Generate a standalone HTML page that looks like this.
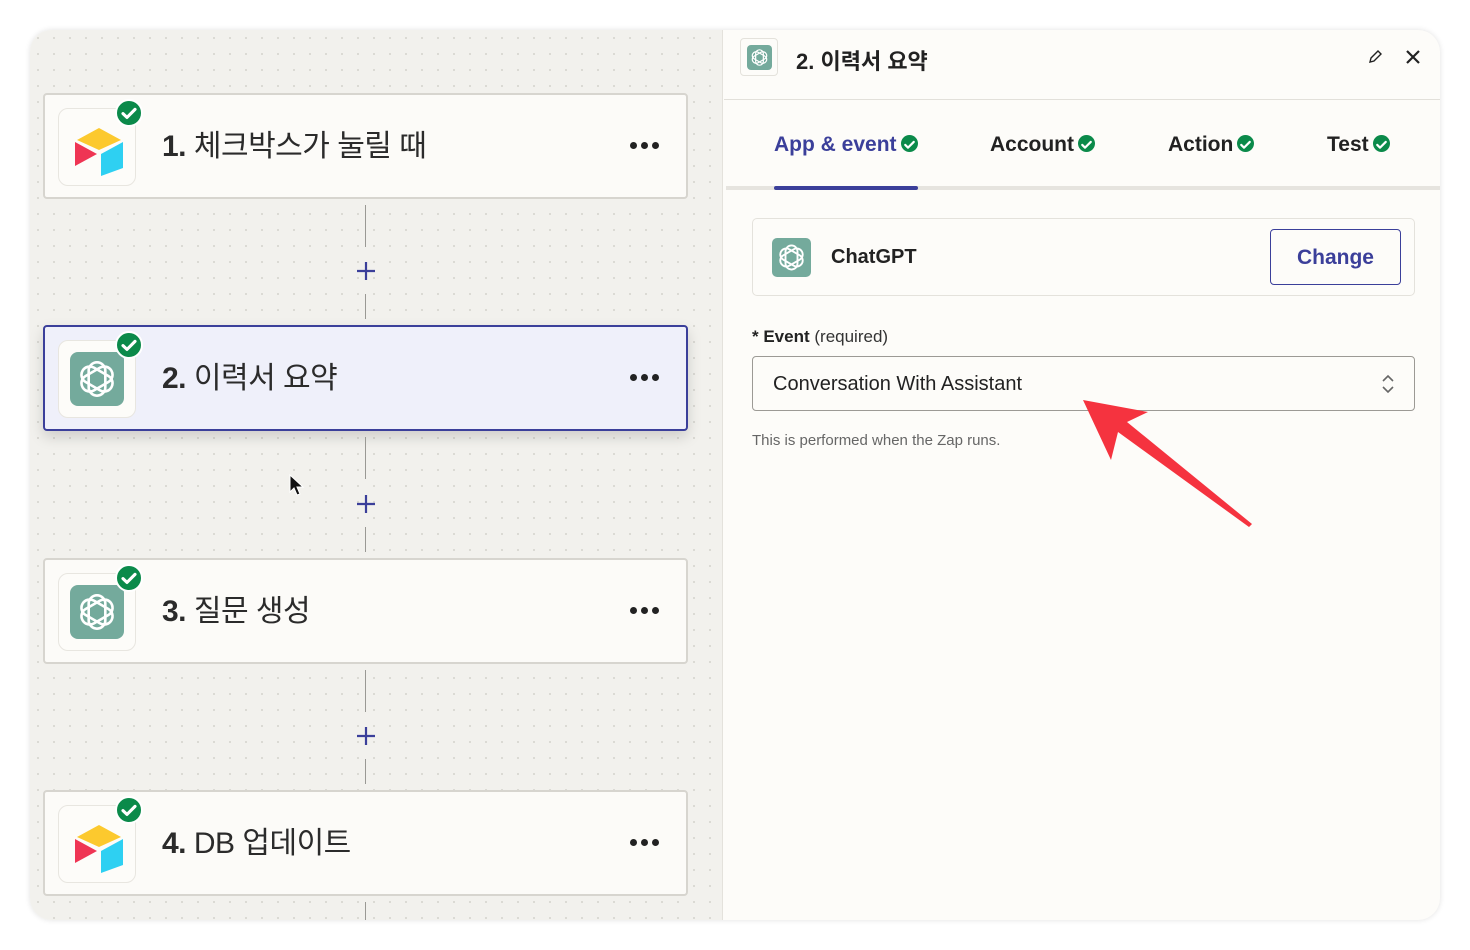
<!DOCTYPE html>
<html><head><meta charset="utf-8"><style>
*{box-sizing:border-box;margin:0;padding:0}
body{width:1470px;height:950px;background:#fff;font-family:"Liberation Sans","Noto Sans CJK KR",sans-serif;position:relative;overflow:hidden}
.frame{position:absolute;left:30px;top:30px;width:1410px;height:890px;border-radius:22px;overflow:hidden;background:#fdfcf9;box-shadow:0 0 6px rgba(0,0,0,.12)}
.left{position:absolute;left:0;top:0;width:693px;height:890px;background-color:#f2f1ed;background-image:radial-gradient(#d9d8d2 1px,transparent 1.2px);background-size:16px 16px;border-right:1px solid #e4e2dc}
.card{position:absolute;left:13px;width:645px;height:106px;background:#fcfbf8;border:2px solid #d7d5cf;border-radius:4px}
.card.sel{background:#eff0fa;border-color:#3b3f9a;box-shadow:0 6px 14px rgba(0,0,0,.15)}
.ib{position:absolute;left:13px;top:13px;width:78px;height:78px;background:#fdfcf9;border:1px solid #e8e6e0;border-radius:10px}
.chk{position:absolute;left:70px;top:4px;width:28px;height:28px;border-radius:50%;background:#0b8a4a;border:2px solid #fff}
.ttl{position:absolute;left:117px;top:35px;font-size:30px;color:#2b2b2b;letter-spacing:-0.5px;line-height:1.1}
.ttl b{font-weight:700}
.dots{position:absolute;left:585px;top:41px}
.dots i{display:inline-block;width:7px;height:7px;border-radius:50%;background:#222;margin-right:4px}
.vl{position:absolute;left:335px;width:1px;background:#9a9994}
.plus{position:absolute;left:326px;width:20px;height:20px}
.gpt{background:#74aa9c;border-radius:8px}
.tab{position:absolute;top:103px;font-size:21px;font-weight:700;color:#222}
.tab .c{display:inline-block;width:17px;height:17px;border-radius:50%;background:#0b8a4a;vertical-align:-2px;margin-left:4px;position:relative}
</style></head><body>
<svg width="0" height="0" style="position:absolute"><defs>
<symbol id="oa" viewBox="0 0 40 40"><g fill="none" stroke="#fff" stroke-width="2.2" transform="translate(20 20) scale(0.88) translate(-20 -20)">
<rect x="13" y="6" width="14" height="28" rx="7"/>
<rect x="13" y="6" width="14" height="28" rx="7" transform="rotate(60 20 20)"/>
<rect x="13" y="6" width="14" height="28" rx="7" transform="rotate(120 20 20)"/>
</g></symbol>
<symbol id="ck" viewBox="0 0 20 20"><path d="M5 10.5l3.3 3.2L15 7" fill="none" stroke="#fff" stroke-width="2.6" stroke-linecap="round" stroke-linejoin="round"/></symbol>
<symbol id="at" viewBox="0 0 60 60"><path d="M10 22 L32 10 L54 22 L32 32Z" fill="#fcc92e"/><path d="M8 24 L30 36 L8 48Z" fill="#ef3554"/><path d="M34 36 L56 24 L56 50 L34 58Z" fill="#2ed0f2"/></symbol>
<symbol id="pl" viewBox="0 0 20 20"><path d="M10 1v18M1 10h18" stroke="#3b3f9a" stroke-width="2.2"/></symbol>
</defs></svg>
<div class="frame">
<div class="left">
 <div class="card" style="top:63px"><div class="ib"><svg style="position:absolute;left:8px;top:9px" width="60" height="60"><use href="#at"/></svg></div><div class="chk"><svg width="24" height="24"><use href="#ck"/></svg></div><div class="ttl"><b>1.</b> 체크박스가 눌릴 때</div><div class="dots"><i></i><i></i><i></i></div></div>
 <div class="vl" style="top:175px;height:42px"></div><svg class="plus" style="top:231px"><use href="#pl"/></svg><div class="vl" style="top:264px;height:25px"></div>
 <div class="card sel" style="top:295px"><div class="ib"><div class="gpt" style="position:absolute;left:11px;top:11px;width:54px;height:54px"><svg width="54" height="54"><use href="#oa"/></svg></div></div><div class="chk"><svg width="24" height="24"><use href="#ck"/></svg></div><div class="ttl"><b>2.</b> 이력서 요약</div><div class="dots"><i></i><i></i><i></i></div></div>
 <div class="vl" style="top:407px;height:42px"></div><svg class="plus" style="top:464px"><use href="#pl"/></svg><div class="vl" style="top:497px;height:25px"></div>
 <div class="card" style="top:528px"><div class="ib"><div class="gpt" style="position:absolute;left:11px;top:11px;width:54px;height:54px"><svg width="54" height="54"><use href="#oa"/></svg></div></div><div class="chk"><svg width="24" height="24"><use href="#ck"/></svg></div><div class="ttl"><b>3.</b> 질문 생성</div><div class="dots"><i></i><i></i><i></i></div></div>
 <div class="vl" style="top:640px;height:42px"></div><svg class="plus" style="top:696px"><use href="#pl"/></svg><div class="vl" style="top:729px;height:25px"></div>
 <div class="card" style="top:760px"><div class="ib"><svg style="position:absolute;left:8px;top:9px" width="60" height="60"><use href="#at"/></svg></div><div class="chk"><svg width="24" height="24"><use href="#ck"/></svg></div><div class="ttl"><b>4.</b> DB 업데이트</div><div class="dots"><i></i><i></i><i></i></div></div>
 <div class="vl" style="top:872px;height:20px"></div>
</div>
<div style="position:absolute;left:710px;top:8px;width:38px;height:38px;border:1px solid #e4e2dc;border-radius:4px;background:#fdfcf9"><div class="gpt" style="position:absolute;left:6px;top:6px;width:25px;height:25px;border-radius:4px"><svg width="25" height="25"><use href="#oa"/></svg></div></div>
<div style="position:absolute;left:766px;top:14px;font-size:22px;font-weight:700;color:#222"><span>2.</span> <span>이력서 요약</span></div>
<svg style="position:absolute;left:1337px;top:19px" width="16" height="16" viewBox="0 0 16 16"><path d="M3 13l1-4 7-7 3 3-7 7z" fill="none" stroke="#222" stroke-width="1.4"/></svg>
<svg style="position:absolute;left:1375px;top:19px" width="16" height="16" viewBox="0 0 16 16"><path d="M2 2l12 12M14 2L2 14" stroke="#222" stroke-width="2.2"/></svg>
<div style="position:absolute;left:694px;top:69px;width:716px;height:1px;background:#e2e0da"></div>
<div class="tab" style="left:744px;color:#3b3f9a">App &amp; event<span class="c"><svg width="17" height="17"><use href="#ck"/></svg></span></div>
<div class="tab" style="left:960px">Account<span class="c"><svg width="17" height="17"><use href="#ck"/></svg></span></div>
<div class="tab" style="left:1138px">Action<span class="c"><svg width="17" height="17"><use href="#ck"/></svg></span></div>
<div class="tab" style="left:1297px">Test<span class="c"><svg width="17" height="17"><use href="#ck"/></svg></span></div>
<div style="position:absolute;left:696px;top:156px;width:714px;height:4px;background:#e6e4df"></div>
<div style="position:absolute;left:744px;top:156px;width:144px;height:4px;background:#3b3f9a;border-radius:2px"></div>
<div style="position:absolute;left:722px;top:188px;width:663px;height:78px;border:1px solid #e4e2dc;border-radius:5px;background:#fdfcf9"></div>
<div class="gpt" style="position:absolute;left:742px;top:208px;width:39px;height:39px;border-radius:5px"><svg width="39" height="39"><use href="#oa"/></svg></div>
<div style="position:absolute;left:801px;top:216px;font-size:20px;font-weight:700;color:#222">ChatGPT</div>
<div style="position:absolute;left:1240px;top:199px;width:131px;height:56px;border:1.5px solid #3b3f9a;border-radius:4px;color:#3b3f9a;font-size:21px;font-weight:700;text-align:center;line-height:55px">Change</div>
<div style="position:absolute;left:722px;top:297px;font-size:17px;color:#222"><b>*&nbsp;Event</b> <span style="color:#333">(required)</span></div>
<div style="position:absolute;left:722px;top:326px;width:663px;height:55px;border:1px solid #9c9a95;border-radius:4px;background:#fdfcf9"></div>
<div style="position:absolute;left:743px;top:343px;font-size:20px;color:#222">Conversation With Assistant</div>
<svg style="position:absolute;left:1350px;top:342px" width="16" height="24" viewBox="0 0 16 24"><path d="M3 9l5-5 5 5M3 15l5 5 5-5" fill="none" stroke="#666" stroke-width="1.6"/></svg>
<div style="position:absolute;left:722px;top:402px;font-size:15px;color:#666">This is performed when the Zap runs.</div>
<svg style="position:absolute;left:0;top:0" width="1410" height="890"><path d="M1053 370 L1118 382 L1097 392 L1222 494 L1219 497 L1088 402 L1081 430 Z" fill="#f5333f"/></svg>
</div>
<svg style="position:absolute;left:289px;top:474px" width="16" height="24" viewBox="0 0 16 24"><path d="M1 1v17l4-4 3 7 3-1-3-7h6z" fill="#111" stroke="#fff" stroke-width="1"/></svg>
</body></html>
